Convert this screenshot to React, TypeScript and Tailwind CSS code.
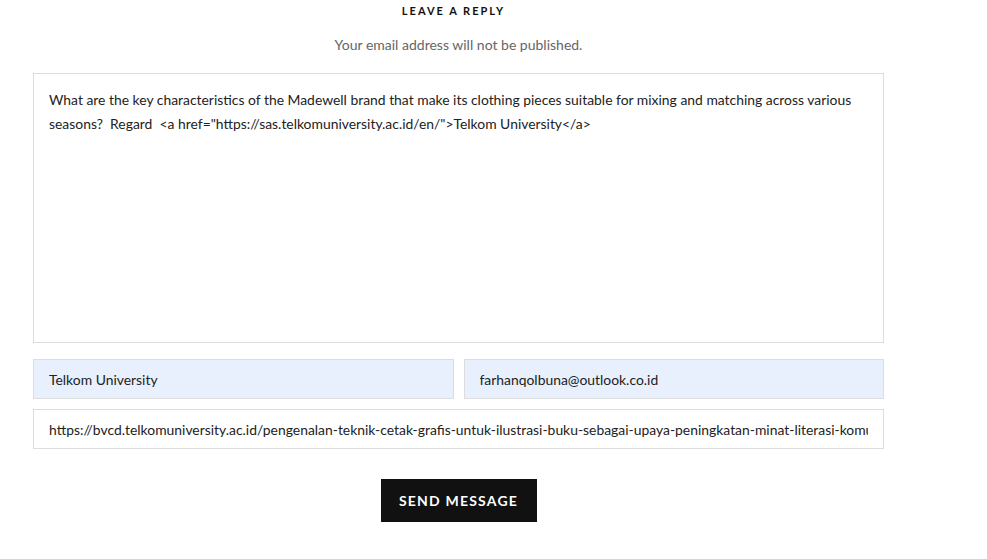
export default function App() {
  const message =
    'What are the key characteristics of the Madewell brand that make its clothing pieces suitable for mixing and matching across various seasons?  Regard  <a href="https://sas.telkomuniversity.ac.id/en/">Telkom University</a>';

  return (
    <div className="min-h-[559px] bg-white font-['Lato',sans-serif] text-[#222]">
      <div className="ml-[33px] w-[851px] pt-[4px]">
        <h3 className="pr-[10px] text-center text-[11px] font-bold uppercase leading-[14px] tracking-[2px] text-[#111]">
          Leave a Reply
        </h3>
        <p className="mt-[19px] text-center text-[14px] leading-[16px] text-[#666]">
          Your email address will not be published.
        </p>

        <form className="mt-[20px] flex flex-col" onSubmit={(e) => e.preventDefault()}>
          <textarea
            defaultValue={message}
            className="h-[270px] w-full resize-none border border-[#dddddd] bg-white px-[15px] py-[14px] text-[13.9px] leading-[24px] text-[#222] outline-none"
          />

          <div className="mt-[16px] flex gap-[10px]">
            <input
              type="text"
              defaultValue="Telkom University"
              className="h-[40px] flex-1 border border-[#dddddd] bg-[#e8f0fe] px-[15px] text-[13.9px] text-[#222] outline-none"
            />
            <input
              type="email"
              defaultValue="farhanqolbuna@outlook.co.id"
              className="h-[40px] flex-1 border border-[#dddddd] bg-[#e8f0fe] px-[15px] text-[13.9px] text-[#222] outline-none"
            />
          </div>

          <input
            type="text"
            defaultValue="https://bvcd.telkomuniversity.ac.id/pengenalan-teknik-cetak-grafis-untuk-ilustrasi-buku-sebagai-upaya-peningkatan-minat-literasi-komunitas/"
            className="mt-[10px] h-[40px] w-full border border-[#dddddd] bg-white px-[15px] text-[13.9px] text-[#222] outline-none"
          />

          <div className="mt-[30px] flex justify-center">
            <button
              type="submit"
              className="h-[43px] w-[156px] bg-[#111111] text-[14px] font-bold uppercase tracking-[1.2px] text-white"
            >
              Send Message
            </button>
          </div>
        </form>
      </div>
    </div>
  );
}
